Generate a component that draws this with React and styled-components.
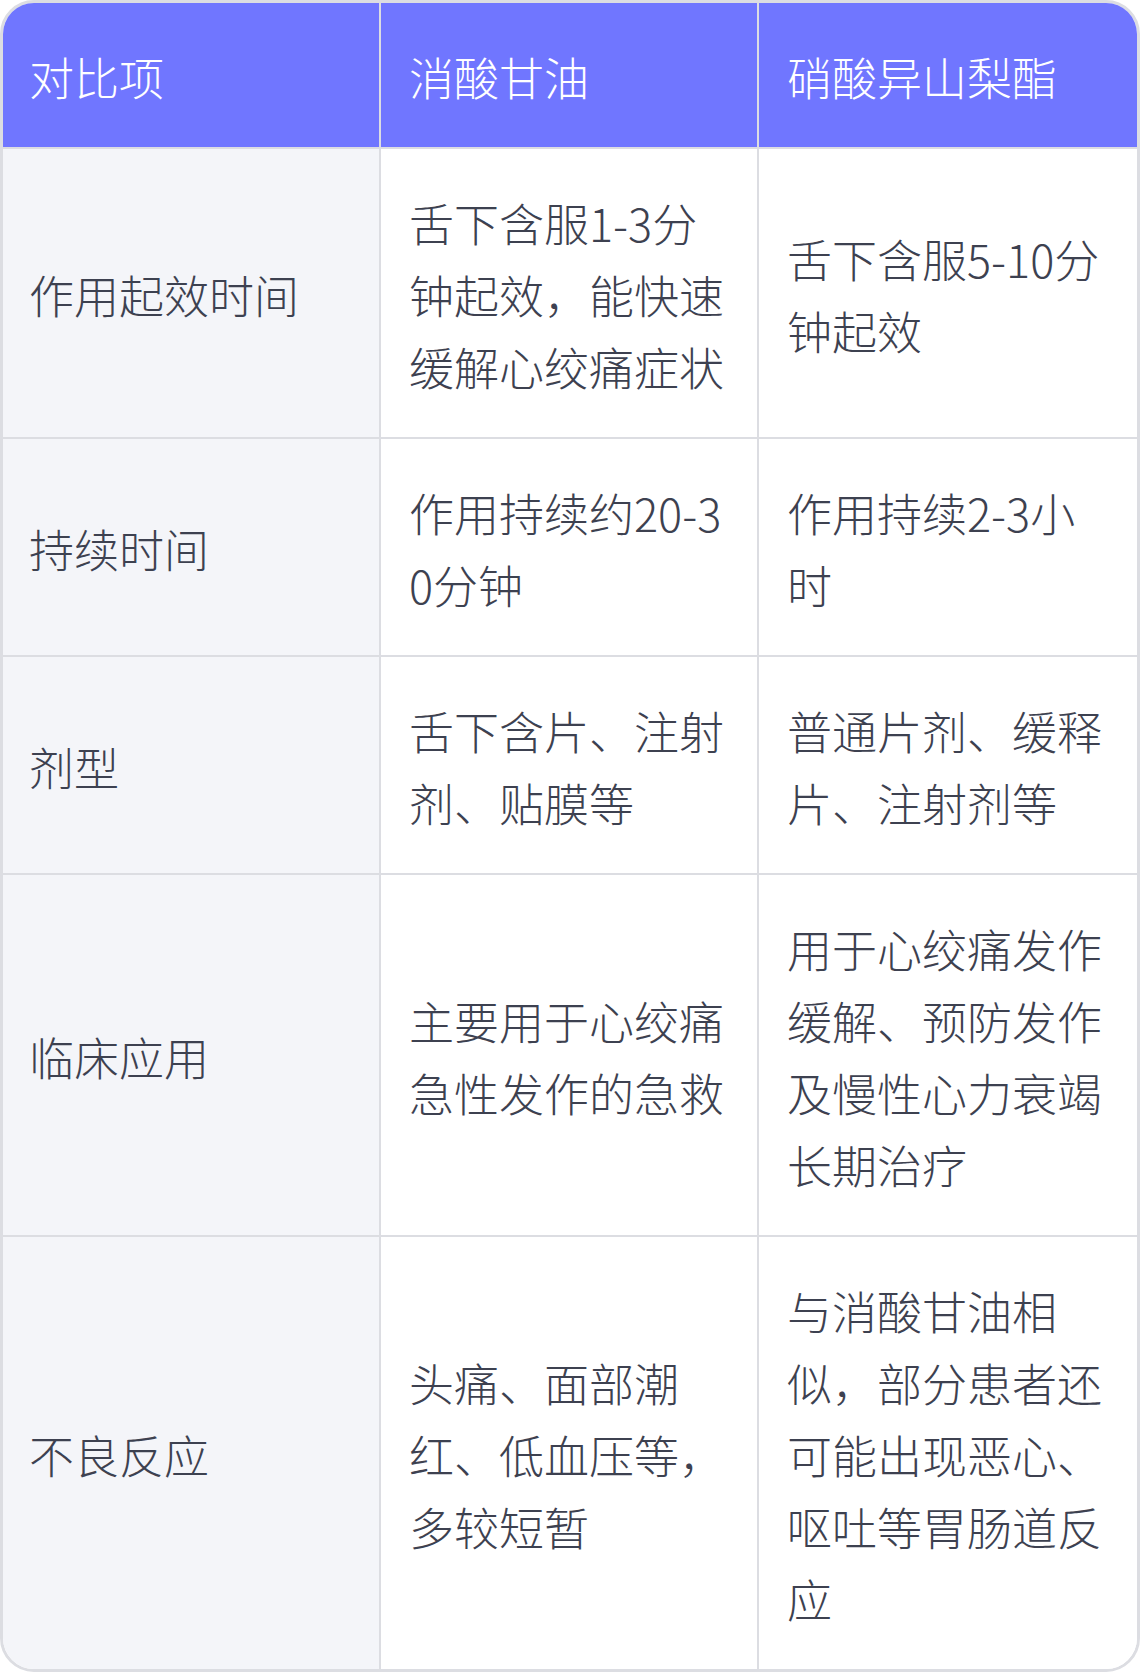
import React from "react";
import styled, { createGlobalStyle } from "styled-components";

const Global = createGlobalStyle`
  html, body { margin: 0; padding: 0; background: #ffffff; }
  body { font-family: "Noto Sans CJK SC", "Noto Sans", sans-serif; }
`;

const Frame = styled.div`
  width: 1140px;
  box-sizing: border-box;
  border: 3px solid #dcdde2;
  border-radius: 34px;
  overflow: hidden;
  background: #ffffff;
`;

const Table = styled.table`
  width: 100%;
  border-collapse: separate;
  border-spacing: 0;
  table-layout: fixed;
`;

const HeadCell = styled.th`
  background: #7076ff;
  color: #ffffff;
  font-weight: 300;
  font-size: 45px;
  line-height: 72px;
  text-align: left;
  padding: 38px 28px 34px ${(p) => (p.$first ? "26px" : "28px")};
  border-right: 2px solid #dcdde2;
  border-bottom: 2px solid #dcdde2;
  &:last-child { border-right: none; }
`;

const Cell = styled.td`
  background: ${(p) => (p.$label ? "#f4f5f9" : "#ffffff")};
  color: #3d4150;
  font-weight: 300;
  font-size: 45px;
  line-height: 72px;
  vertical-align: middle;
  padding: 38px 28px 34px ${(p) => (p.$label ? "26px" : "28px")};
  word-break: break-all;
  border-right: 2px solid #dcdde2;
  border-bottom: 2px solid #dcdde2;
  &:last-child { border-right: none; }
  tr:last-child > & { border-bottom: none; }
`;

const head = ["对比项", "消酸甘油", "硝酸异山梨酯"];

const rows = [
  ["作用起效时间", "舌下含服1-3分钟起效，能快速缓解心绞痛症状", "舌下含服5-10分钟起效"],
  ["持续时间", "作用持续约20-30分钟", "作用持续2-3小时"],
  ["剂型", "舌下含片、注射剂、贴膜等", "普通片剂、缓释片、注射剂等"],
  ["临床应用", "主要用于心绞痛急性发作的急救", "用于心绞痛发作缓解、预防发作及慢性心力衰竭长期治疗"],
  ["不良反应", "头痛、面部潮红、低血压等，多较短暂", "与消酸甘油相似，部分患者还可能出现恶心、呕吐等胃肠道反应"],
];

export default function App() {
  return (
    <>
      <Global />
      <Frame>
        <Table>
          <thead>
            <tr>
              {head.map((h, i) => (
                <HeadCell key={h} $first={i === 0}>{h}</HeadCell>
              ))}
            </tr>
          </thead>
          <tbody>
            {rows.map((r) => (
              <tr key={r[0]}>
                <Cell $label>{r[0]}</Cell>
                <Cell>{r[1]}</Cell>
                <Cell>{r[2]}</Cell>
              </tr>
            ))}
          </tbody>
        </Table>
      </Frame>
    </>
  );
}
